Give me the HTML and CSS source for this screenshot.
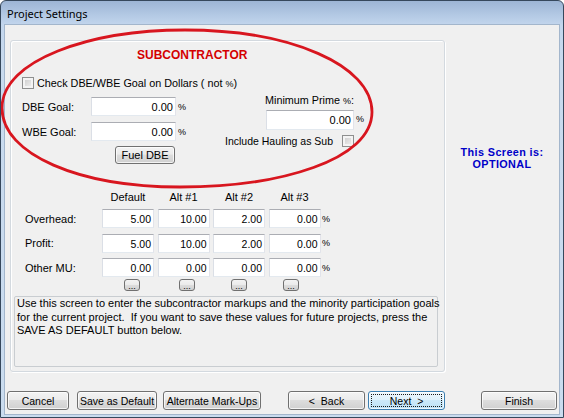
FILE: index.html
```html
<!DOCTYPE html>
<html>
<head>
<meta charset="utf-8">
<title>Project Settings</title>
<link rel="stylesheet" href="styles.css">
</head>
<body>
<div class="window">
  <div class="titlebar">Project Settings</div>
  <div class="client">
    <div class="main">
      <div class="panel">
        <div class="panel-title">SUBCONTRACTOR</div>
        <div class="check-row"><span class="cb"></span><span class="check-text">Check DBE/WBE Goal on Dollars ( not <span class="small-pct">%</span>)</span></div>
        <div class="upper">
          <div class="goals">
            <div class="field"><span class="flabel">DBE Goal:</span><span class="tb goal">0.00</span><span class="pct">%</span></div>
            <div class="field"><span class="flabel">WBE Goal:</span><span class="tb goal">0.00</span><span class="pct">%</span></div>
            <div class="btn fuel">Fuel DBE</div>
          </div>
          <div class="prime">
            <div class="prime-label">Minimum Prime <span class="small-pct">%</span>:</div>
            <div class="field"><span class="tb prime-tb">0.00</span><span class="pct">%</span></div>
            <div class="haul"><span>Include Hauling as Sub</span><span class="cb"></span></div>
          </div>
        </div>
        <div class="markups">
          <span></span><span class="colh">Default</span><span class="colh">Alt #1</span><span class="colh">Alt #2</span><span class="colh">Alt #3</span><span></span>
          <span class="rlabel">Overhead:</span><span class="tb num">5.00</span><span class="tb num">10.00</span><span class="tb num">2.00</span><span class="tb num">0.00</span><span class="pct">%</span>
          <span class="rlabel">Profit:</span><span class="tb num">5.00</span><span class="tb num">10.00</span><span class="tb num">2.00</span><span class="tb num">0.00</span><span class="pct">%</span>
          <span class="rlabel">Other MU:</span><span class="tb num">0.00</span><span class="tb num">0.00</span><span class="tb num">0.00</span><span class="tb num">0.00</span><span class="pct">%</span>
        </div>
        <div class="dots">
          <div class="dot">...</div>
          <div class="dot d2">...</div>
          <div class="dot d3">...</div>
          <div class="dot d3">...</div>
        </div>
        <div class="desc">Use this screen to enter the subcontractor markups and the minority participation goals<br>for the current project.&nbsp; If you want to save these values for future projects, press the<br>SAVE AS DEFAULT button below.</div>
      </div>
      <div class="side">
        <div class="optional">
          <div class="opt-line">This Screen is:</div>
          <div class="opt-line">OPTIONAL</div>
        </div>
      </div>
    </div>
    <div class="buttons">
      <div class="btn b-cancel">Cancel</div>
      <div class="btn b-save">Save as Default</div>
      <div class="btn b-alt">Alternate Mark-Ups</div>
      <div class="btn b-back">&lt;&nbsp; Back</div>
      <div class="btn b-next">Next&nbsp; &gt;<span class="focus"></span></div>
      <div class="btn b-finish">Finish</div>
    </div>
  </div>
  <svg class="annot" width="564" height="418" viewBox="0 0 564 418">
    <path d="M 2 108 C 2 60, 90 30, 185 30 C 290 30, 372 65, 372 112 C 372 160, 280 187, 180 187 C 80 187, 2 155, 2 108 Z" fill="none" stroke="#d8161f" stroke-width="2.8"/>
  </svg>
</div>
</body>
</html>
```

FILE: styles.css
```css
body {
  margin: 0;
  width: 564px;
  height: 418px;
  overflow: hidden;
  background: #ffffff;
  font-family: "Liberation Sans", Arial, sans-serif;
  font-size: 11px;
  color: #000;
}

.window {
  position: relative;
  box-sizing: border-box;
  width: 564px;
  height: 418px;
  border: 1px solid #36485c;
  border-radius: 6px 6px 0 0;
  background: linear-gradient(180deg, #9db5d5 0px, #b3c9e4 14px, #c3d6ed 24px, #c8daee 60px, #cadcef 100%);
  display: flex;
  flex-direction: column;
  overflow: hidden;
}

.titlebar {
  flex: none;
  height: 24px;
  line-height: 25px;
  padding-left: 6px;
  font-family: "Noto Sans", "Open Sans", sans-serif;
  font-size: 11px;
  color: #000;
}

.client {
  flex: 1;
  margin: 0 4px 3px 4px;
  background: #f0f0f0;
  box-shadow: 0 0 0 1px #a3b6cc;
  display: flex;
  flex-direction: column;
  min-height: 0;
}

.main {
  flex: 1;
  display: flex;
  padding: 15px 0 0 5px;
  min-height: 0;
}

.panel {
  flex: none;
  box-sizing: border-box;
  width: 435px;
  height: 332px;
  border: 1px solid #d3d9df;
  border-radius: 3px;
  box-shadow: inset 1px 1px 0 #ffffff, 1px 1px 0 #ffffff;
}

.panel-title {
  margin: 7px 0 0 126px;
  height: 14px;
  line-height: 14px;
  color: #d40000;
  font-weight: bold;
  font-size: 12px;
}

.check-row {
  display: flex;
  align-items: center;
  gap: 3px;
  height: 13px;
  margin: 14px 0 0 11px;
}

.check-text {
  font-size: 10.8px;
}

.small-pct {
  font-size: 9px;
}

.cb {
  display: block;
  box-sizing: border-box;
  width: 12px;
  height: 12px;
  border: 1px solid #8e8f8f;
  background: linear-gradient(135deg, #c9c9c9, #f4f4f4);
  box-shadow: inset 0 0 0 2px #f4f4f4;
}

.upper {
  display: flex;
  justify-content: space-between;
  width: 351px;
}

.goals {
  margin: 8px 0 0 11px;
  display: flex;
  flex-direction: column;
  align-items: flex-start;
}

.field {
  display: flex;
  align-items: center;
}

.goals .field + .field {
  margin-top: 6px;
}

.flabel {
  width: 69px;
}

.tb {
  display: block;
  box-sizing: border-box;
  height: 19px;
  background: #ffffff;
  border: 1px solid;
  border-color: #abadb3 #e2e3ea #e3e9ef #dbdfe6;
  text-align: right;
  padding-right: 2px;
  line-height: 18px;
}

.goal {
  width: 85px;
}

.pct {
  width: 6px;
  margin-left: 2px;
  font-size: 9px;
}

.btn {
  box-sizing: border-box;
  height: 19px;
  border: 1px solid #707070;
  border-radius: 3px;
  background: linear-gradient(180deg, #f3f3f3 0%, #ebebeb 45%, #dddddd 50%, #d0d0d0 100%);
  box-shadow: inset 0 0 0 1px rgba(255, 255, 255, 0.75);
  display: flex;
  align-items: center;
  justify-content: center;
  white-space: nowrap;
  color: #000;
  font-size: 10.5px;
}

.fuel {
  margin: 5px 0 0 93px;
  width: 60px;
  height: 18px;
  font-size: 11px;
}

.prime {
  margin-top: 5px;
  display: flex;
  flex-direction: column;
  align-items: flex-end;
}

.prime-label {
  line-height: 13px;
  margin-right: 8px;
  font-size: 10.8px;
}

.prime-tb {
  width: 88px;
  height: 20px;
  margin-top: 2px;
}

.haul {
  display: flex;
  align-items: center;
  gap: 9px;
  height: 13px;
  margin: 4px 8px 0 0;
  font-size: 10.5px;
}

.markups {
  display: grid;
  grid-template-columns: 73.5px repeat(4, 52px) 8px;
  grid-template-rows: 13px 19px 19px 19px;
  column-gap: 3.5px;
  row-gap: 5.5px;
  align-items: center;
  margin: 26.5px 0 0 14px;
}

.colh {
  text-align: center;
}

.num {
  font-size: 10.5px;
}

.markups .pct {
  margin-left: -2px;
}

.dots {
  display: flex;
  margin: 2px 0 0 113px;
  height: 12px;
}

.dot {
  box-sizing: border-box;
  width: 16px;
  height: 12px;
  border: 1px solid #707070;
  border-radius: 3px;
  background: linear-gradient(180deg, #f3f3f3 0%, #ebebeb 45%, #dddddd 50%, #d0d0d0 100%);
  font-size: 9px;
  line-height: 12px;
  text-align: center;
}

.d2 {
  margin-left: 39px;
}

.d3 {
  margin-left: 36px;
}

.desc {
  box-sizing: border-box;
  margin: 5px 0 0 3px;
  width: 424px;
  height: 71px;
  border: 1px solid #c9cdd1;
  border-radius: 2px;
  padding: 0 2px;
  line-height: 13.5px;
  white-space: nowrap;
}

.side {
  flex: 1;
  display: flex;
  justify-content: center;
}

.optional {
  margin-top: 106px;
  text-align: center;
  color: #0000c8;
  font-weight: bold;
  font-size: 10.8px;
  letter-spacing: 0.4px;
}

.opt-line {
  height: 12px;
  line-height: 12px;
  white-space: nowrap;
}

.buttons {
  flex: none;
  display: flex;
  height: 19px;
  padding: 0 2px 4px 2px;
}

.b-cancel { width: 62px; }
.b-save { width: 80px; margin-left: 8px; }
.b-alt { width: 98px; margin-left: 6px; }
.b-back { width: 77px; margin-left: 27px; }
.b-next {
  position: relative;
  width: 77px;
  margin-left: 3px;
  border-color: #3c7fb1;
  background: linear-gradient(180deg, #eef7fd 0%, #dff1fb 45%, #cce9f9 50%, #bde2f6 100%);
}
.b-finish { width: 76px; margin-left: 36px; }

.focus {
  position: absolute;
  left: 2px;
  top: 2px;
  right: 2px;
  bottom: 2px;
  border: 1px dotted #1a1a1a;
}

.annot {
  position: absolute;
  left: -1px;
  top: -1px;
  pointer-events: none;
}
```
